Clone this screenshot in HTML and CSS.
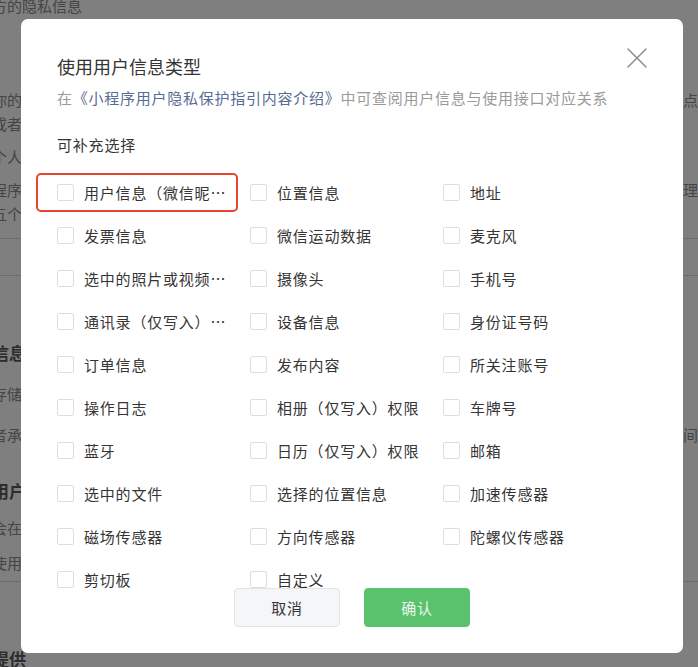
FILE: index.html
```html
<!DOCTYPE html>
<html lang="zh-CN">
<head>
<meta charset="utf-8">
<title>使用用户信息类型</title>
<link rel="stylesheet" href="styles.css">
</head>
<body>
<div class="page">
  <div class="line first"><span class="l">方的隐私信息</span></div>
  <div class="line mt70"><span class="l">你的小</span><span class="r">点击</span></div>
  <div class="line"><span class="l">或者根</span></div>
  <div class="line mt9"><span class="l">个人信</span></div>
  <div class="line mt9"><span class="l">程序开</span><span class="r">理你</span></div>
  <div class="line"><span class="l">五个工</span></div>
  <div class="rule mt12"></div>
  <div class="rule mt36"></div>
  <div class="line head mt65"><span class="l">信息存</span></div>
  <div class="line mt17"><span class="l">存储地</span></div>
  <div class="line mt17"><span class="l">者承诺</span><span class="r">间</span></div>
  <div class="line head mt32"><span class="l">用户权</span></div>
  <div class="line mt13"><span class="l">会在此</span></div>
  <div class="line mt11"><span class="l">使用用</span></div>
  <div class="rule mt6"></div>
  <div class="line head mt65"><span class="l">提供</span></div>
</div>

<div class="mask"></div>

<div class="dialog">
  <button class="close" type="button" aria-label="关闭">
    <svg width="20" height="20" viewBox="0 0 20 20"><path d="M1 1 L19 19 M19 1 L1 19" stroke="#8c8c8c" stroke-width="1.5" fill="none" stroke-linecap="round"/></svg>
  </button>
  <div class="title">使用用户信息类型</div>
  <div class="desc">在<span class="link">《小程序用户隐私保护指引内容介绍》</span>中可查阅用户信息与使用接口对应关系</div>
  <div class="section">可补充选择</div>
  <div class="options">
    <label class="opt"><span class="box"></span><span class="txt">用户信息（微信昵称、头像）</span></label>
    <label class="opt"><span class="box"></span><span class="txt">位置信息</span></label>
    <label class="opt"><span class="box"></span><span class="txt">地址</span></label>
    <label class="opt"><span class="box"></span><span class="txt">发票信息</span></label>
    <label class="opt"><span class="box"></span><span class="txt">微信运动数据</span></label>
    <label class="opt"><span class="box"></span><span class="txt">麦克风</span></label>
    <label class="opt"><span class="box"></span><span class="txt">选中的照片或视频信息</span></label>
    <label class="opt"><span class="box"></span><span class="txt">摄像头</span></label>
    <label class="opt"><span class="box"></span><span class="txt">手机号</span></label>
    <label class="opt"><span class="box"></span><span class="txt">通讯录（仅写入）权限</span></label>
    <label class="opt"><span class="box"></span><span class="txt">设备信息</span></label>
    <label class="opt"><span class="box"></span><span class="txt">身份证号码</span></label>
    <label class="opt"><span class="box"></span><span class="txt">订单信息</span></label>
    <label class="opt"><span class="box"></span><span class="txt">发布内容</span></label>
    <label class="opt"><span class="box"></span><span class="txt">所关注账号</span></label>
    <label class="opt"><span class="box"></span><span class="txt">操作日志</span></label>
    <label class="opt"><span class="box"></span><span class="txt">相册（仅写入）权限</span></label>
    <label class="opt"><span class="box"></span><span class="txt">车牌号</span></label>
    <label class="opt"><span class="box"></span><span class="txt">蓝牙</span></label>
    <label class="opt"><span class="box"></span><span class="txt">日历（仅写入）权限</span></label>
    <label class="opt"><span class="box"></span><span class="txt">邮箱</span></label>
    <label class="opt"><span class="box"></span><span class="txt">选中的文件</span></label>
    <label class="opt"><span class="box"></span><span class="txt">选择的位置信息</span></label>
    <label class="opt"><span class="box"></span><span class="txt">加速传感器</span></label>
    <label class="opt"><span class="box"></span><span class="txt">磁场传感器</span></label>
    <label class="opt"><span class="box"></span><span class="txt">方向传感器</span></label>
    <label class="opt"><span class="box"></span><span class="txt">陀螺仪传感器</span></label>
    <label class="opt"><span class="box"></span><span class="txt">剪切板</span></label>
    <label class="opt"><span class="box"></span><span class="txt">自定义</span></label>
  </div>
  <div class="footer">
    <button class="btn cancel" type="button">取消</button>
    <button class="btn ok" type="button">确认</button>
  </div>
  <div class="mark"></div>
</div>
</body>
</html>
```

FILE: styles.css
```css
html, body {
  margin: 0;
  padding: 0;
  overflow: hidden;
  background: #ffffff;
}
body {
  width: 698px;
  height: 667px;
  font-family: "Noto Sans CJK SC", "Noto Sans", sans-serif;
  color: #353535;
}

/* background page */
.page {
  margin-left: -8px;
  width: 706px;
  font-size: 15px;
  color: #8a8a8a;
}
.line {
  display: flex;
  height: 24px;
  line-height: 24px;
  white-space: nowrap;
  overflow: hidden;
}
.line .l { flex: 1; overflow: hidden; }
.line .r { width: 15px; overflow: hidden; }
.line.first { margin-top: -6px; }
.line.head { font-size: 17px; font-weight: 700; color: #5a5a5a; }
.rule { height: 1px; background: #d8d8d8; margin-left: 8px; }
.mt6 { margin-top: 6px; }
.mt9 { margin-top: 9px; }
.mt11 { margin-top: 11px; }
.mt12 { margin-top: 12px; }
.mt13 { margin-top: 13px; }
.mt17 { margin-top: 17px; }
.mt32 { margin-top: 32px; }
.mt36 { margin-top: 36px; }
.mt65 { margin-top: 65px; }
.mt70 { margin-top: 70px; }

.mask {
  position: fixed;
  inset: 0;
  background: rgba(0, 0, 0, 0.5);
}

/* dialog */
.dialog {
  position: fixed;
  left: 21px;
  top: 19px;
  width: 662px;
  height: 634px;
  box-sizing: border-box;
  padding: 35px 36px 26px;
  background: #ffffff;
  border-radius: 7px;
  display: flex;
  flex-direction: column;
}
.close {
  position: absolute;
  top: 29px;
  right: 36px;
  width: 20px;
  height: 20px;
  padding: 0;
  border: 0;
  background: none;
  display: block;
}
.close svg { display: block; }
.title {
  font-size: 18px;
  line-height: 24px;
  color: #353535;
}
.desc {
  margin-top: 9px;
  font-size: 15px;
  line-height: 22px;
  letter-spacing: 0.75px;
  color: #9a9a9a;
  white-space: nowrap;
}
.link { color: #576b95; }
.section {
  margin-top: 25px;
  font-size: 15px;
  line-height: 22px;
  letter-spacing: 0.8px;
  color: #353535;
}
.options {
  margin-top: 15px;
  height: 417px;
  overflow: hidden;
  display: grid;
  grid-template-columns: repeat(3, 193px);
  grid-auto-rows: 43px;
}
.opt {
  display: flex;
  align-items: center;
  gap: 10px;
}
.box {
  flex: none;
  width: 17px;
  height: 17px;
  box-sizing: border-box;
  border: 1px solid #dedede;
  border-radius: 2px;
  background: #fff;
}
.txt {
  max-width: 150px;
  font-size: 15px;
  line-height: 22px;
  letter-spacing: 0.8px;
  color: #353535;
  white-space: nowrap;
  overflow: hidden;
  text-overflow: ellipsis;
}
.footer {
  display: flex;
  justify-content: center;
  gap: 24px;
}
.btn {
  width: 106px;
  height: 39px;
  box-sizing: border-box;
  border-radius: 4px;
  font-family: "Noto Sans CJK SC", "Noto Sans", sans-serif;
  font-size: 15px;
  letter-spacing: 0.8px;
  padding: 0;
}
.cancel {
  background: #f5f6f7;
  border: 1px solid #e3e4e6;
  color: #353535;
}
.ok {
  background: #5ac16c;
  border: 1px solid #5ac16c;
  color: #eaf7ec;
}
.mark {
  position: absolute;
  left: 15px;
  top: 154px;
  width: 202px;
  height: 39px;
  box-sizing: border-box;
  border: 2px solid #e4462f;
  border-radius: 5px;
  pointer-events: none;
}
```
